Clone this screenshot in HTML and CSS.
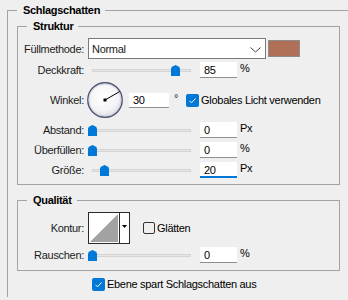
FILE: index.html
```html
<!DOCTYPE html>
<html>
<head>
    <title>Schlagschatten</title>
    <link rel="stylesheet" href="styles.css">
</head>
<body>
<fieldset class="group outer">
    <legend>Schlagschatten</legend>

    <fieldset class="group inner struktur">
        <legend>Struktur</legend>
        <div class="row row-mode">
            <label class="lbl">Füllmethode:</label>
            <div class="select">
                <span>Normal</span>
                <svg width="11" height="6" viewBox="0 0 11 6"><polyline points="0.5,0.5 5.5,5 10.5,0.5" fill="none" stroke="#444" stroke-width="1"/></svg>
            </div>
            <div class="swatch"></div>
        </div>
        <div class="row">
            <label class="lbl">Deckkraft:</label>
            <div class="slider">
                <div class="track"></div>
                <svg class="thumb" style="left:83px" width="9" height="11" viewBox="0 0 9 11"><path d="M0,11 V4 Q0,2.5 1.5,1.6 L4.5,0 L7.5,1.6 Q9,2.5 9,4 V11 Z" fill="#0078d7"/></svg>
            </div>
            <div class="num">85</div>
            <span class="unit">%</span>
        </div>
        <div class="row row-angle">
            <label class="lbl">Winkel:</label>
            <svg class="dial" width="38" height="38" viewBox="0 0 38 38">
                <defs>
                    <radialGradient id="dialfill" cx="45%" cy="40%" r="60%">
                        <stop offset="0" stop-color="#ffffff"/>
                        <stop offset="0.7" stop-color="#f4f4f6"/>
                        <stop offset="1" stop-color="#dcdde4"/>
                    </radialGradient>
                </defs>
                <circle cx="19" cy="19" r="17.2" fill="url(#dialfill)" stroke="#4c5373" stroke-width="1.4"/>
                <circle cx="19" cy="19" r="16" fill="none" stroke="#c9cbd6" stroke-width="0.8"/>
                <line x1="19" y1="19" x2="33.6" y2="10.6" stroke="#000" stroke-width="1"/>
                <rect x="17.5" y="17.5" width="3" height="3" fill="#000"/>
            </svg>
            <div class="num angle">30</div>
            <span class="deg">°</span>
            <span class="check">
                <span class="box on"><svg width="13" height="13" viewBox="0 0 13 13"><polyline points="3.5,6.8 5.5,8.8 9.5,4.5" fill="none" stroke="#fff" stroke-width="1"/></svg></span>
                Globales Licht verwenden
            </span>
        </div>
        <div class="row">
            <label class="lbl">Abstand:</label>
            <div class="slider">
                <div class="track"></div>
                <svg class="thumb" style="left:0px" width="9" height="11" viewBox="0 0 9 11"><path d="M0,11 V4 Q0,2.5 1.5,1.6 L4.5,0 L7.5,1.6 Q9,2.5 9,4 V11 Z" fill="#0078d7"/></svg>
            </div>
            <div class="num">0</div>
            <span class="unit">Px</span>
        </div>
        <div class="row">
            <label class="lbl">Überfüllen:</label>
            <div class="slider">
                <div class="track"></div>
                <svg class="thumb" style="left:0px" width="9" height="11" viewBox="0 0 9 11"><path d="M0,11 V4 Q0,2.5 1.5,1.6 L4.5,0 L7.5,1.6 Q9,2.5 9,4 V11 Z" fill="#0078d7"/></svg>
            </div>
            <div class="num">0</div>
            <span class="unit">%</span>
        </div>
        <div class="row">
            <label class="lbl">Größe:</label>
            <div class="slider">
                <div class="track"></div>
                <svg class="thumb" style="left:12px" width="9" height="11" viewBox="0 0 9 11"><path d="M0,11 V4 Q0,2.5 1.5,1.6 L4.5,0 L7.5,1.6 Q9,2.5 9,4 V11 Z" fill="#0078d7"/></svg>
            </div>
            <div class="num focus">20</div>
            <span class="unit">Px</span>
        </div>
    </fieldset>

    <fieldset class="group inner qualitaet">
        <legend>Qualität</legend>
        <div class="row row-contour">
            <label class="lbl">Kontur:</label>
            <svg class="contour" width="42" height="32" viewBox="0 0 42 32">
                <rect x="0.5" y="0.5" width="41" height="31" fill="#fff" stroke="#2b2b2b"/>
                <polygon points="2,30 30,2 30,30" fill="#a2a2a2"/>
                <line x1="31.5" y1="1" x2="31.5" y2="31" stroke="#2b2b2b"/>
                <polygon points="34,13 39,13 36.5,16" fill="#000"/>
            </svg>
            <span class="check glatt">
                <span class="box off"></span>
                Glätten
            </span>
        </div>
        <div class="row">
            <label class="lbl">Rauschen:</label>
            <div class="slider">
                <div class="track"></div>
                <svg class="thumb" style="left:0px" width="9" height="11" viewBox="0 0 9 11"><path d="M0,11 V4 Q0,2.5 1.5,1.6 L4.5,0 L7.5,1.6 Q9,2.5 9,4 V11 Z" fill="#0078d7"/></svg>
            </div>
            <div class="num">0</div>
            <span class="unit">%</span>
        </div>
    </fieldset>

    <div class="knockout">
        <span class="check">
            <span class="box on"><svg width="13" height="13" viewBox="0 0 13 13"><polyline points="3.5,6.8 5.5,8.8 9.5,4.5" fill="none" stroke="#fff" stroke-width="1"/></svg></span>
            Ebene spart Schlagschatten aus
        </span>
    </div>
</fieldset>
</body>
</html>
```

FILE: styles.css
```css
body {
    margin: 0;
    background: #efefef;
    font-family: "Liberation Sans", Arial, sans-serif;
    font-size: 11px;
    letter-spacing: -0.3px;
    color: #1b1b1b;
    overflow: hidden;
}
.group {
    border: 1px solid #a3a3a3;
    margin: 0;
    padding: 0;
    min-width: 0;
}
.group legend {
    margin-left: 9px;
    padding: 0 5px 0 6px;
    font-weight: bold;
    line-height: 14px;
    color: #000;
}
.outer {
    margin: 3px 0 0 7px;
    width: 341px;
    box-sizing: border-box;
    border-right: none;
    border-bottom: none;
    padding-bottom: 6px;
}
.inner {
    margin-left: 9px;
    width: 323px;
    box-sizing: border-box;
}
.struktur {
    margin-top: 2px;
    padding: 5px 0 4px;
}
.qualitaet {
    margin-top: 8px;
    padding: 5px 0 5px;
}
.row {
    display: flex;
    align-items: center;
    height: 20px;
}
.lbl {
    flex: none;
    width: 66px;
    margin-right: 4px;
    text-align: right;
}
.row-mode {
    height: 21px;
    margin-bottom: 1px;
}
.select {
    flex: none;
    width: 178px;
    height: 21px;
    box-sizing: border-box;
    border: 1px solid #7a7a7a;
    background: #fff;
    display: flex;
    align-items: center;
    justify-content: space-between;
    padding: 0 4px 0 3px;
}
.select svg {
    margin-top: 2px;
}
.swatch {
    flex: none;
    width: 32px;
    height: 17px;
    box-sizing: border-box;
    margin-left: 2px;
    background: #b07058;
    border: 1px solid #8c8c8c;
}
.slider {
    position: relative;
    flex: none;
    width: 107px;
    height: 20px;
    margin-right: 5px;
    display: flex;
    align-items: center;
}
.track {
    flex: 1;
    margin: 0 4px;
    height: 1px;
    background: #e7e7e7;
    border: 1px solid #d4d4d4;
}
.thumb {
    position: absolute;
    top: 5px;
}
.num {
    flex: none;
    width: 37px;
    height: 16px;
    box-sizing: border-box;
    padding-left: 4px;
    background: #fff;
    border-bottom: 1px solid #8f8f8f;
    line-height: 16px;
    color: #000;
}
.num.focus {
    border-bottom: 2px solid #0078d7;
}
.unit {
    align-self: flex-start;
    margin-left: 3px;
    line-height: 16px;
    color: #000;
}
.row-angle {
    height: 40px;
}
.dial {
    flex: none;
    margin-left: -2px;
}
.num.angle {
    width: 40px;
    height: 15px;
    margin-left: 5px;
    line-height: 15px;
}
.deg {
    align-self: flex-start;
    margin: 11px 0 0 5px;
    line-height: 14px;
}
.check {
    display: flex;
    align-items: center;
    margin-left: 8px;
    color: #000;
}
.box {
    flex: none;
    width: 13px;
    height: 13px;
    box-sizing: border-box;
    border-radius: 2px;
    margin-right: 2px;
}
.box svg {
    display: block;
}
.box.on {
    background: #0078d7;
}
.box.off {
    width: 12px;
    height: 12px;
    border: 1px solid #333;
    margin-right: 2px;
}
.row-contour {
    height: 32px;
    margin-bottom: 1px;
}
.contour {
    flex: none;
}
.check.glatt {
    margin-left: 13px;
}
.knockout {
    margin: 6px 0 0 84px;
    height: 14px;
    display: flex;
    align-items: center;
}
.knockout .check {
    margin-left: 0;
}
```
